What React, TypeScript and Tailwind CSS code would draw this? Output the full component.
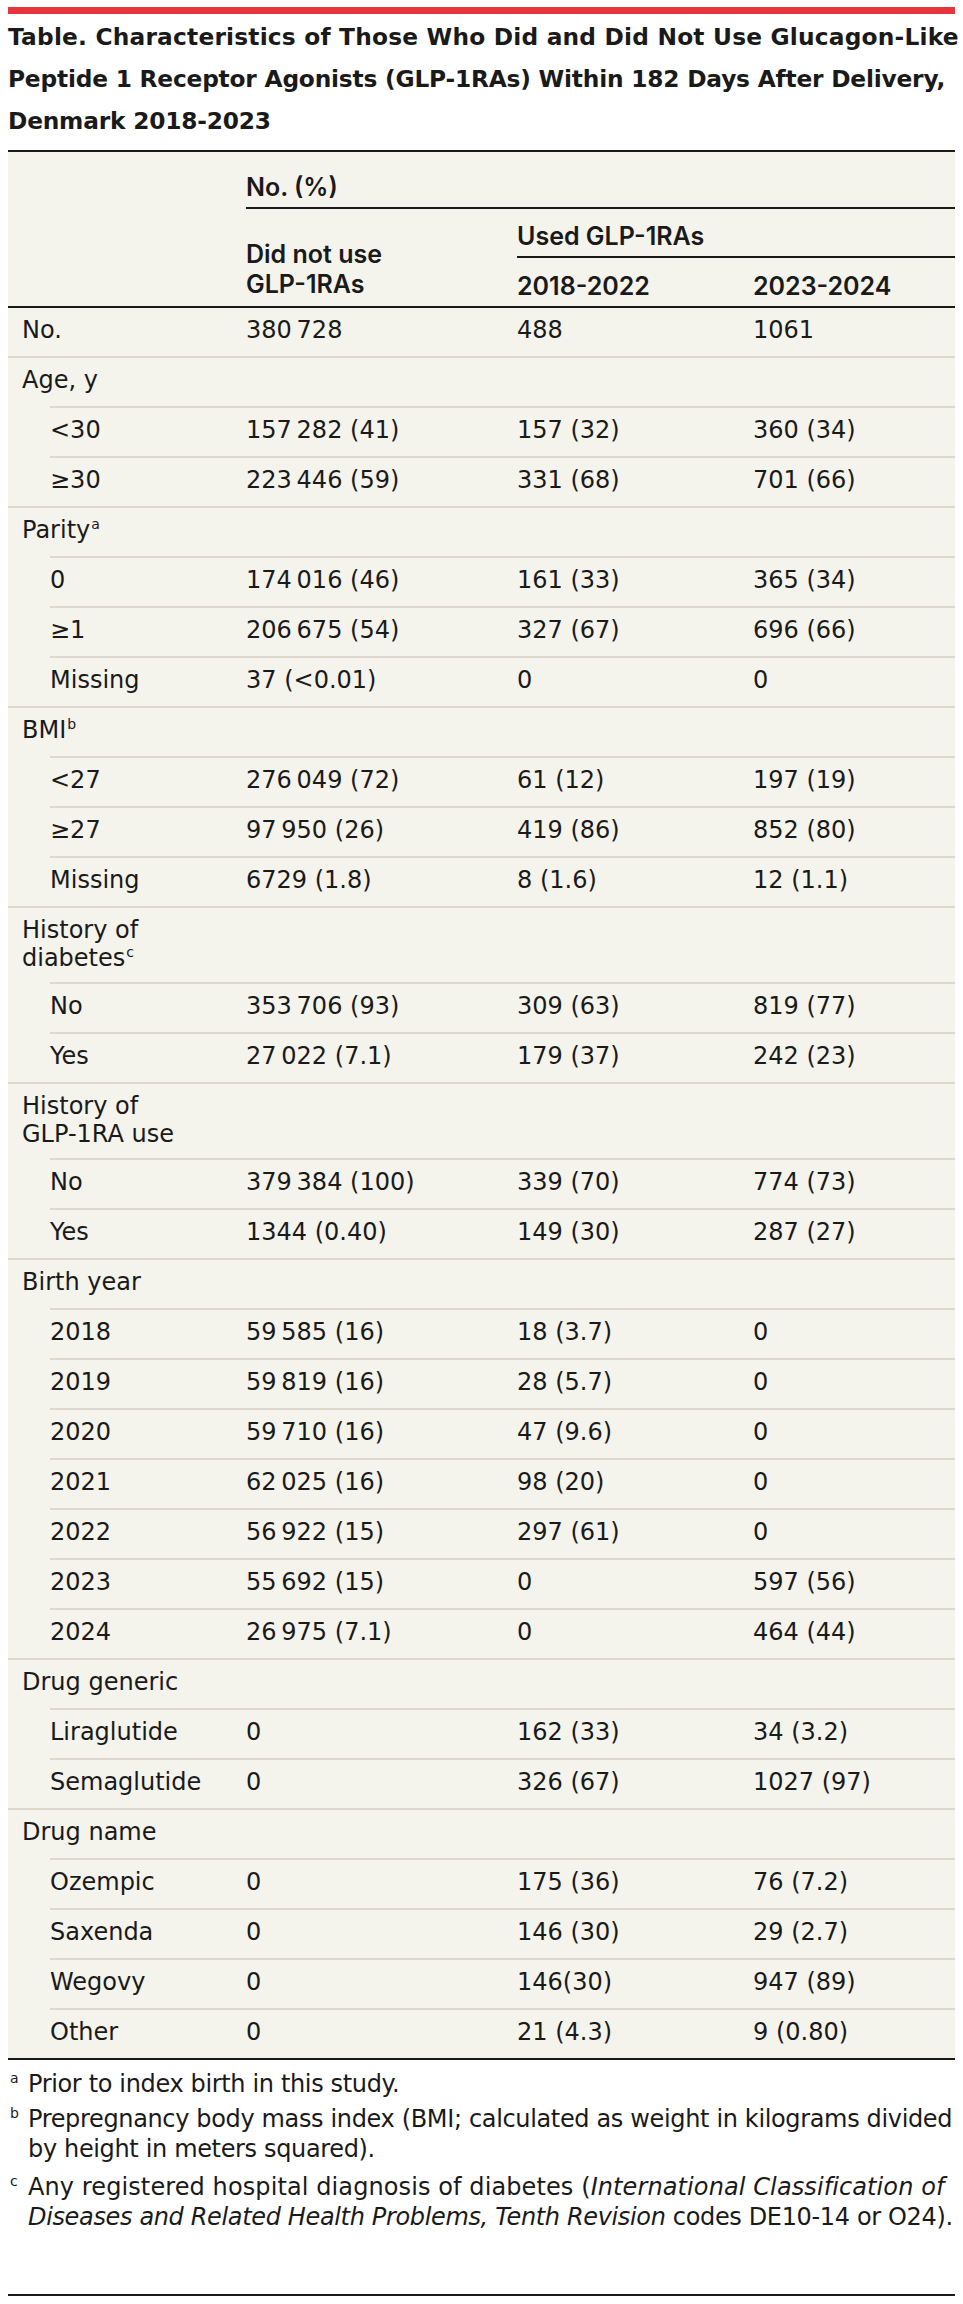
import React from 'react';

type Row = {
  label: React.ReactNode;
  values?: [string, string, string];
  sub?: boolean;
  tall?: boolean;
};

const t = '\u2009';

const Sup = ({ children }: { children: React.ReactNode }) => (
  <sup className="text-[14px] ml-[1px] relative top-[-9px]">{children}</sup>
);

const rows: Row[] = [
  { label: 'No.', values: [`380${t}728`, '488', '1061'] },
  { label: 'Age, y' },
  { label: '<30', sub: true, values: [`157${t}282 (41)`, '157 (32)', '360 (34)'] },
  { label: '≥30', sub: true, values: [`223${t}446 (59)`, '331 (68)', '701 (66)'] },
  { label: <>Parity<Sup>a</Sup></> },
  { label: '0', sub: true, values: [`174${t}016 (46)`, '161 (33)', '365 (34)'] },
  { label: '≥1', sub: true, values: [`206${t}675 (54)`, '327 (67)', '696 (66)'] },
  { label: 'Missing', sub: true, values: ['37 (<0.01)', '0', '0'] },
  { label: <>BMI<Sup>b</Sup></> },
  { label: '<27', sub: true, values: [`276${t}049 (72)`, '61 (12)', '197 (19)'] },
  { label: '≥27', sub: true, values: [`97${t}950 (26)`, '419 (86)', '852 (80)'] },
  { label: 'Missing', sub: true, values: ['6729 (1.8)', '8 (1.6)', '12 (1.1)'] },
  { label: <>History of<br />diabetes<Sup>c</Sup></>, tall: true },
  { label: 'No', sub: true, values: [`353${t}706 (93)`, '309 (63)', '819 (77)'] },
  { label: 'Yes', sub: true, values: [`27${t}022 (7.1)`, '179 (37)', '242 (23)'] },
  { label: <>History of<br />GLP-1RA use</>, tall: true },
  { label: 'No', sub: true, values: [`379${t}384 (100)`, '339 (70)', '774 (73)'] },
  { label: 'Yes', sub: true, values: ['1344 (0.40)', '149 (30)', '287 (27)'] },
  { label: 'Birth year' },
  { label: '2018', sub: true, values: [`59${t}585 (16)`, '18 (3.7)', '0'] },
  { label: '2019', sub: true, values: [`59${t}819 (16)`, '28 (5.7)', '0'] },
  { label: '2020', sub: true, values: [`59${t}710 (16)`, '47 (9.6)', '0'] },
  { label: '2021', sub: true, values: [`62${t}025 (16)`, '98 (20)', '0'] },
  { label: '2022', sub: true, values: [`56${t}922 (15)`, '297 (61)', '0'] },
  { label: '2023', sub: true, values: [`55${t}692 (15)`, '0', '597 (56)'] },
  { label: '2024', sub: true, values: [`26${t}975 (7.1)`, '0', '464 (44)'] },
  { label: 'Drug generic' },
  { label: 'Liraglutide', sub: true, values: ['0', '162 (33)', '34 (3.2)'] },
  { label: 'Semaglutide', sub: true, values: ['0', '326 (67)', '1027 (97)'] },
  { label: 'Drug name' },
  { label: 'Ozempic', sub: true, values: ['0', '175 (36)', '76 (7.2)'] },
  { label: 'Saxenda', sub: true, values: ['0', '146 (30)', '29 (2.7)'] },
  { label: 'Wegovy', sub: true, values: ['0', '146(30)', '947 (89)'] },
  { label: 'Other', sub: true, values: ['0', '21 (4.3)', '9 (0.80)'] },
];

const App = () => {
  return (
    <div className="w-[963px] min-h-[2304px] bg-white text-[#1a1a1a] font-['DejaVu_Sans',sans-serif] px-[8px] pt-[7px]">
      <div className="h-[7px] w-full bg-[#e6363b]" />
      <h1 className="mt-[2px] text-[23.3px] leading-[42px] font-bold whitespace-nowrap">
        <span className="tracking-[0.2px]">Table. Characteristics of Those Who Did and Did Not Use Glucagon-Like</span>
        <br />
        <span className="tracking-[-0.2px]">Peptide 1 Receptor Agonists (GLP-1RAs) Within 182 Days After Delivery,</span>
        <br />
        <span className="tracking-[-0.2px]">Denmark 2018-2023</span>
      </h1>

      <div className="mt-[8px] bg-[#f4f3ec] border-t-2 border-[#1a1a1a]">
        {/* header */}
        <div className="grid grid-cols-[238px_271px_236px_1fr] font-['Inter',sans-serif] text-[25px] leading-[30px] font-semibold border-b-2 border-[#1a1a1a]">
          <div className="col-start-2 col-span-3 pt-[20px] pb-[5px] border-b-2 border-[#1a1a1a]">No. (%)</div>
          <div className="col-start-2 row-start-2 row-span-2 self-end pb-[7px]">
            Did not use<br />GLP-1RAs
          </div>
          <div className="col-start-3 col-span-2 row-start-2 pt-[12px] pb-[5px] border-b-2 border-[#1a1a1a]">Used GLP-1RAs</div>
          <div className="col-start-3 row-start-3 pt-[13px] pb-[5px]">2018-2022</div>
          <div className="col-start-4 row-start-3 pt-[13px] pb-[5px]">2023-2024</div>
        </div>

        {/* body */}
        <div className="text-[24px] leading-[28px]">
          {rows.map((r, i) => (
            <div
              key={i}
              className={`flex ${r.tall ? 'pb-[10px]' : 'pb-[12px]'} ${i === 0 ? 'pt-[8px]' : 'pt-[8px] border-t-2 border-[#dcd8cc]'} ${r.sub ? 'ml-[42px]' : ''}`}
            >
              <div className={r.sub ? 'w-[196px] shrink-0' : 'w-[238px] shrink-0 pl-[14px]'}>{r.label}</div>
              {r.values && (
                <>
                  <div className="w-[271px] shrink-0">{r.values[0]}</div>
                  <div className="w-[236px] shrink-0">{r.values[1]}</div>
                  <div className="flex-1">{r.values[2]}</div>
                </>
              )}
            </div>
          ))}
        </div>
      </div>

      {/* footnotes */}
      <div className="border-t-2 border-[#1a1a1a] pt-[9px] pb-[62px] text-[24px] leading-[30px] tracking-[-0.35px] border-b-2 border-b-[#1a1a1a]">
        <div className="flex">
          <span className="w-[20px] shrink-0 pl-[2px] text-[14px] leading-[18px]">a</span>
          <p>Prior to index birth in this study.</p>
        </div>
        <div className="flex mt-[5px]">
          <span className="w-[20px] shrink-0 pl-[2px] text-[14px] leading-[18px]">b</span>
          <p className="whitespace-nowrap">
            Prepregnancy body mass index (BMI; calculated as weight in kilograms divided
            <br />
            by height in meters squared).
          </p>
        </div>
        <div className="flex mt-[8px]">
          <span className="w-[20px] shrink-0 pl-[2px] text-[14px] leading-[18px]">c</span>
          <p className="whitespace-nowrap">
            <span className="tracking-[0.1px]">
              Any registered hospital diagnosis of diabetes (<i>International Classification of</i>
            </span>
            <br />
            <i>Diseases and Related Health Problems, Tenth Revision</i> codes DE10-14 or O24).
          </p>
        </div>
      </div>
    </div>
  );
};

export default App;
